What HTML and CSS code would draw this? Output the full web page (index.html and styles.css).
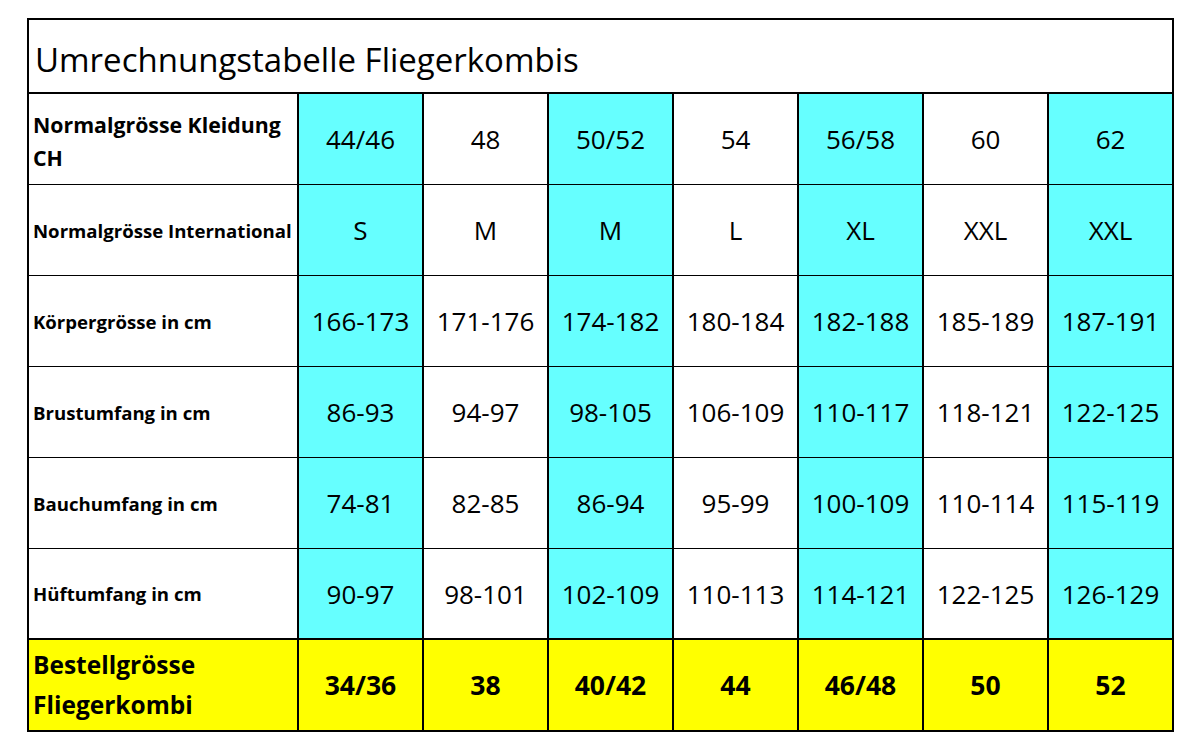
FILE: index.html
```html
<!DOCTYPE html>
<html lang="de">
<head>
<meta charset="utf-8">
<title>Umrechnungstabelle Fliegerkombis</title>
<link rel="stylesheet" href="styles.css">
</head>
<body>
<div class="sheet">
  <div class="title">Umrechnungstabelle Fliegerkombis</div>
  <div class="row">
    <div class="label big">Normalgrösse Kleidung<br>CH</div>
    <div class="cell c">44/46</div><div class="cell">48</div><div class="cell c">50/52</div><div class="cell">54</div><div class="cell c">56/58</div><div class="cell">60</div><div class="cell c last">62</div>
  </div>
  <div class="row">
    <div class="label">Normalgrösse International</div>
    <div class="cell c">S</div><div class="cell">M</div><div class="cell c">M</div><div class="cell">L</div><div class="cell c">XL</div><div class="cell">XXL</div><div class="cell c last">XXL</div>
  </div>
  <div class="row">
    <div class="label">Körpergrösse in cm</div>
    <div class="cell c">166-173</div><div class="cell">171-176</div><div class="cell c">174-182</div><div class="cell">180-184</div><div class="cell c">182-188</div><div class="cell">185-189</div><div class="cell c last">187-191</div>
  </div>
  <div class="row">
    <div class="label">Brustumfang in cm</div>
    <div class="cell c">86-93</div><div class="cell">94-97</div><div class="cell c">98-105</div><div class="cell">106-109</div><div class="cell c">110-117</div><div class="cell">118-121</div><div class="cell c last">122-125</div>
  </div>
  <div class="row">
    <div class="label">Bauchumfang in cm</div>
    <div class="cell c">74-81</div><div class="cell">82-85</div><div class="cell c">86-94</div><div class="cell">95-99</div><div class="cell c">100-109</div><div class="cell">110-114</div><div class="cell c last">115-119</div>
  </div>
  <div class="row before-order">
    <div class="label">Hüftumfang in cm</div>
    <div class="cell c">90-97</div><div class="cell">98-101</div><div class="cell c">102-109</div><div class="cell">110-113</div><div class="cell c">114-121</div><div class="cell">122-125</div><div class="cell c last">126-129</div>
  </div>
  <div class="row order">
    <div class="label">Bestellgrösse<br>Fliegerkombi</div>
    <div class="cell">34/36</div><div class="cell">38</div><div class="cell">40/42</div><div class="cell">44</div><div class="cell">46/48</div><div class="cell">50</div><div class="cell last">52</div>
  </div>
</div>
</body>
</html>
```
FILE: styles.css
```css
html, body {
  margin: 0;
  padding: 0;
  background: #ffffff;
}
body {
  padding: 18px 0 0 27px;
  font-family: "Open Sans", "Liberation Sans", sans-serif;
  color: #000;
}
.sheet {
  width: 1143px;
  border: 2px solid #000;
  background: #fff;
}
.title {
  border-bottom: 2px solid #000;
  display: flex;
  align-items: center;
  padding: 6px 0 0 6px;
  box-sizing: border-box;
  height: 74px;
  font-size: 33px;
  line-height: 1;
}
.row {
  display: grid;
  grid-template-columns: 270px repeat(6, 125px) 123px;
  height: 91px;
  border-bottom: 1px solid #000;
  box-sizing: border-box;
}
.row.before-order {
  border-bottom: 2px solid #000;
}
.row.order {
  height: 90px;
  border-bottom: none;
  background: #ffff00;
}
.label {
  border-right: 2px solid #000;
  display: flex;
  align-items: center;
  padding-left: 4px;
  font-weight: 700;
  font-size: 18.6px;
  line-height: 33px;
  white-space: nowrap;
}
.label.big {
  font-size: 21.3px;
  line-height: 33px;
  padding-top: 3px;
}
.cell {
  border-right: 2px solid #000;
  display: flex;
  align-items: center;
  justify-content: center;
  font-size: 26px;
}
.cell.last {
  border-right: none;
}
.cell.c {
  background: #66ffff;
}
.order .label {
  font-size: 24.5px;
  line-height: 40px;
  padding-left: 4px;
}
.order .cell {
  font-weight: 700;
  font-size: 26.5px;
}
```
